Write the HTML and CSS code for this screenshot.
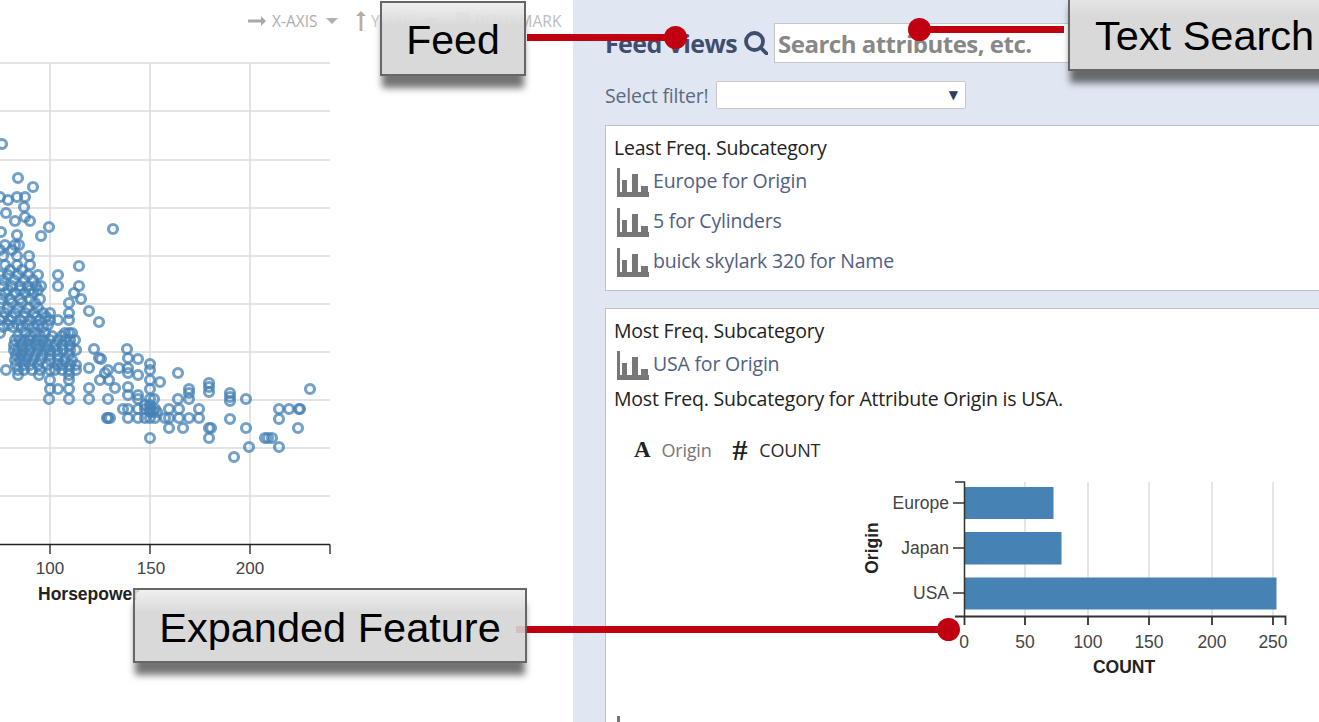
FILE: index.html
```html
<!DOCTYPE html>
<html lang="en">
<head>
<meta charset="utf-8">
<title>Feed Views</title>
<link rel="stylesheet" href="styles.css">
</head>
<body>
<div class="page">
  <section class="plot-side">
    <div class="toolbar">
      <span class="tool tool-x">
        <svg class="ico-right" viewBox="0 0 18 10"><path d="M0 3.6h13V0l5 5-5 5V6.4H0z"/></svg>X-AXIS<i class="caret"></i>
      </span>
      <span class="tool tool-y">
        <svg class="ico-up" viewBox="0 0 10 20"><path d="M3.6 20V5H0l5-5 5 5H6.4v15z"/></svg>Y-AXIS<i class="caret"></i>
      </span>
      <span class="tool tool-b">
        <svg class="ico-mark" viewBox="0 0 13 18"><path d="M0 0h13v18l-6.500-5L0 18z"/></svg>BOOKMARK
      </span>
    </div>
    <svg class="scatter" viewBox="0 60 340 550" id="scatter">
      <g class="grid">
        <path d="M0 63H330M0 111H330M0 160H330M0 208H330M0 256H330M0 304H330M0 352H330M0 400H330M0 448H330M0 496H330"/>
        <path d="M50 63V545M150 63V545M250 63V545"/>
      </g>
      <g class="rings" id="rings"></g>
      <path class="axis" d="M0 544.500H330M50 544.500V554M150 544.500V554M250 544.500V554M330 544.500V554"/>
      <g class="tick-text">
        <text x="50" y="574">100</text>
        <text x="151" y="574">150</text>
        <text x="250" y="574">200</text>
      </g>
      <text class="axis-title" x="38" y="600">Horsepower</text>
    </svg>
  </section>

  <section class="feed">
    <header class="feed-head">
      <h2 class="feed-title">Feed Views</h2>
      <svg class="ico-search" viewBox="0 0 24 24"><circle cx="10.500" cy="10.500" r="8.500"/><path d="M16.500 16.500L22.500 22.500"/></svg>
      <input class="search" type="text" placeholder="Search attributes, etc.">
    </header>
    <div class="filter-row">
      <span class="filter-label">Select filter!</span>
      <div class="select"><span class="select-arrow">▼</span></div>
    </div>

    <article class="card card-least">
      <h3 class="card-title">Least Freq. Subcategory</h3>
      <div class="item"><svg class="ico-bar" viewBox="0 0 32 29"><path d="M0 0h3v24h29v5H0zM5 12h5v12H5zM15 6h6v18h-6zM24 18h7v6h-7z"/></svg><a class="item-link">Europe for Origin</a></div>
      <div class="item"><svg class="ico-bar" viewBox="0 0 32 29"><path d="M0 0h3v24h29v5H0zM5 12h5v12H5zM15 6h6v18h-6zM24 18h7v6h-7z"/></svg><a class="item-link">5 for Cylinders</a></div>
      <div class="item"><svg class="ico-bar" viewBox="0 0 32 29"><path d="M0 0h3v24h29v5H0zM5 12h5v12H5zM15 6h6v18h-6zM24 18h7v6h-7z"/></svg><a class="item-link">buick skylark 320 for Name</a></div>
    </article>

    <article class="card card-most">
      <h3 class="card-title">Most Freq. Subcategory</h3>
      <div class="item item-open"><svg class="ico-bar" viewBox="0 0 32 29"><path d="M0 0h3v24h29v5H0zM5 12h5v12H5zM15 6h6v18h-6zM24 18h7v6h-7z"/></svg><a class="item-link">USA for Origin</a></div>
      <p class="sentence">Most Freq. Subcategory for Attribute Origin is USA.</p>
      <div class="fields">
        <span class="type">A</span><span class="field-a">Origin</span>
        <span class="type type-hash">#</span><span class="field-b">COUNT</span>
      </div>
      <svg class="bars" viewBox="860 478 430 200">
        <path class="bar-grid" d="M1025 482V616M1088 482V616M1149 482V616M1212 482V616M1273 482V616"/>
        <g class="bar-fill">
          <rect x="964" y="487" width="89.500" height="32"/>
          <rect x="964" y="532" width="97.500" height="32.500"/>
          <rect x="964" y="577.500" width="312.500" height="32"/>
        </g>
        <path class="bar-axis" d="M955 482H964.500V616M953 503H964M953 548H964M953 593H964"/>
        <path class="bar-axis bar-axis-x" d="M955 616.500H1285.500V625M964.500 616.500V625M1025 616.500V625M1088 616.500V625M1149 616.500V625M1212 616.500V625M1273 616.500V625"/>
        <g class="bar-y-text">
          <text x="949" y="509">Europe</text>
          <text x="949" y="554">Japan</text>
          <text x="949" y="599">USA</text>
        </g>
        <g class="bar-x-text">
          <text x="964" y="648">0</text>
          <text x="1025" y="648">50</text>
          <text x="1088" y="648">100</text>
          <text x="1149" y="648">150</text>
          <text x="1212" y="648">200</text>
          <text x="1273" y="648">250</text>
        </g>
        <text class="bar-title" x="1124" y="673">COUNT</text>
        <text class="bar-title" transform="translate(878 548) rotate(-90)">Origin</text>
      </svg>
      <div class="item item-next"><svg class="ico-bar" viewBox="0 0 32 29"><path d="M0 0h3v24h29v5H0zM5 12h5v12H5zM15 6h6v18h-6zM24 18h7v6h-7z"/></svg><a class="item-link">Feat for all items</a></div>
    </article>
  </section>
</div>

<div class="note note-feed">Feed</div>
<div class="lead lead-feed"></div><div class="pin pin-feed"></div>
<div class="note note-search">Text Search</div>
<div class="lead lead-search"></div><div class="pin pin-search"></div>
<div class="note note-expanded">Expanded Feature</div>
<div class="lead lead-expanded"></div><div class="pin pin-expanded"></div>
<script src="app.js"></script>
</body>
</html>
```
FILE: styles.css
```css
* { box-sizing: border-box; }
html, body { margin: 0; height: 722px; overflow: hidden; background: #fff; }
body { position: relative; font-family: "Open Sans", sans-serif; }
.page { display: flex; width: 1319px; height: 722px; overflow: hidden; }

/* left: scatter plot */
.plot-side { flex: 0 0 573px; }
.toolbar { display: flex; align-items: center; height: 60px; padding: 0 0 18px 248px; font-size: 15.500px; color: #aeaeae; white-space: nowrap; }
.tool { display: flex; align-items: center; }
.tool-x { width: 109px; }
.tool-y { width: 99px; color: #c9c9c9; }
.tool-b { color: #bdbdbd; }
.ico-right { width: 18px; height: 10px; margin-right: 6px; fill: #a9a9a9; }
.ico-up { width: 10px; height: 20px; margin: 0 5px 0 -1px; fill: #b9aea6; }
.ico-mark { width: 13px; height: 18px; margin-right: 6px; fill: #d2d2d2; }
.caret { width: 0; height: 0; margin-left: 8px; border: 6px solid transparent; border-top: 6px solid #b0b0b0; border-bottom: 0; }
.scatter { display: block; width: 340px; height: 550px; overflow: visible; }
.grid path { fill: none; stroke: #dcdcdc; stroke-width: 1.500; }
.rings { filter: blur(0.4px); }
.rings circle { fill: none; stroke: #4682b4; stroke-width: 3.200; stroke-opacity: 0.75; }
.axis { fill: none; stroke: #222; stroke-width: 1.300; }
.tick-text text { font: 17px "Liberation Sans", sans-serif; fill: #444; text-anchor: middle; }
.axis-title { font: bold 17.500px "Liberation Sans", sans-serif; fill: #222; }

/* right: feed panel */
.feed { flex: 1; min-width: 0; background: #e0e7f2; padding: 23px 0 0 32px; }
.feed-head { display: flex; align-items: center; height: 40px; }
.feed-title { flex: 0 0 132px; margin: 0; font-size: 25px; font-weight: 700; letter-spacing: -0.6px; color: #3f4d6e; white-space: nowrap; }
.ico-search { flex: none; width: 24px; height: 24px; margin-left: 7px; fill: none; stroke: #3f4d6e; stroke-width: 3.800; stroke-linecap: round; }
.search { flex: none; width: 400px; height: 40px; margin-left: 6px; padding: 0 3px; border: 1px solid #c6c6c6; background: #fff; font: 700 24px "Open Sans", sans-serif; letter-spacing: -0.5px; outline: 0; }
.search::placeholder { color: #888; opacity: 1; }
.filter-row { display: flex; align-items: center; gap: 7px; height: 28px; margin-top: 18px; }
.filter-label { flex: 0 0 104px; font-size: 19.500px; letter-spacing: -0.2px; color: #5b6a80; white-space: nowrap; }
.select { display: flex; align-items: center; justify-content: flex-end; width: 250px; height: 28px; padding-right: 7px; background: #fff; border: 1px solid #c9c9c9; border-radius: 2px; }
.select-arrow { font: 12px "DejaVu Sans", sans-serif; color: #2c3c5e; }

.card { width: 760px; padding: 11px 8px 0; background: #fff; border: 1px solid #bcc0c4; }
.card-least { height: 166px; margin-top: 16px; }
.card-most { height: 440px; margin-top: 17px; }
.card-title { margin: 0; height: 22px; font-size: 19.500px; line-height: 22px; font-weight: 400; letter-spacing: -0.2px; color: #222; white-space: nowrap; }
.item { display: flex; height: 40px; padding-left: 3px; }
.card-least .card-title + .item { margin-top: 9px; }
.ico-bar { flex: none; width: 32px; height: 29px; margin-right: 4px; fill: #777; }
.item-link { font-size: 19.500px; line-height: 26px; letter-spacing: -0.2px; color: #52607f; white-space: nowrap; }
.card-most .card-title + .item { margin-top: 9px; height: 36px; }
.sentence { margin: 0; height: 24px; font-size: 19.500px; line-height: 24px; letter-spacing: -0.2px; color: #222; white-space: nowrap; }
.fields { display: flex; align-items: center; height: 36px; margin-top: 21px; padding-left: 20px; font-size: 18px; letter-spacing: -0.2px; white-space: nowrap; }
.type { font: bold 23px "Liberation Serif", serif; color: #222; }
.type-hash { margin-left: 21px; font-weight: 700; font-size: 30px; line-height: 1; }
.field-a { margin-left: 11px; color: #777; }
.field-b { margin-left: 12px; color: #2a2a2a; }
.bars { display: block; width: 430px; height: 200px; margin: 10px 0 0 246px; overflow: visible; }
.bar-grid { fill: none; stroke: #dedede; stroke-width: 1.500; }
.bar-fill rect { fill: #4682b4; }
.bar-axis { fill: none; stroke: #333; stroke-width: 1.500; }
.bar-axis-x { stroke-width: 1.800; }
.bar-y-text text, .bar-x-text text { font: 17.500px "Liberation Sans", sans-serif; fill: #444; }
.bar-y-text text { text-anchor: end; }
.bar-x-text text { text-anchor: middle; }
.bar-title { font: bold 17.500px "Liberation Sans", sans-serif; fill: #222; text-anchor: middle; }
.item-next { margin-top: 38px; }
.item-next .item-link { margin: 2px 0 0 -20px; }

/* callouts laid over the screenshot */
.note { position: absolute; display: flex; align-items: center; justify-content: center; font-family: "Liberation Sans", sans-serif; color: #000; white-space: nowrap; border: 2px solid #666; background: linear-gradient(rgba(236, 236, 236, 0.82), #d9d9d9 32%); box-shadow: 0 14px 7px -2px rgba(0, 0, 0, 0.55); }
.note-feed { left: 380px; top: 1px; width: 146px; height: 75px; padding-top: 4px; font-size: 41px; }
.note-search { left: 1068px; top: -10px; width: 270px; height: 81px; padding: 10px 0 0 25px; justify-content: flex-start; font-size: 41.500px; }
.note-expanded { left: 133px; top: 588px; width: 394px; height: 75px; padding-top: 5px; font-size: 41.500px; }
.lead { position: absolute; height: 7px; background: #c00010; }
.pin { position: absolute; width: 23px; height: 23px; border-radius: 50%; background: #c00010; }
.lead-feed { left: 527px; top: 33.500px; width: 148px; }
.pin-feed { left: 664px; top: 25.500px; }
.lead-search { left: 919px; top: 25.500px; width: 145px; }
.pin-search { left: 907.500px; top: 17.500px; }
.lead-expanded { left: 527px; top: 625.500px; width: 421px; }
.lead-expanded::before { content: ""; position: absolute; left: -11px; top: 0; width: 11px; height: 7px; background: rgba(192, 0, 16, 0.12); }
.pin-expanded { left: 937px; top: 617.500px; }
```
FILE: app.js
```js
var rows = [
  [144,[2]],[178,[18]],[187,[33]],[197,[0,17,25]],[200,[8]],[207,[24]],[213,[6]],[217,[25]],
  [221,[15,30]],[227,[49]],[229,[113]],[232,[1]],[235,[17]],[236,[41]],[245,[5,15,19]],[250,[0,12]],
  [256,[3,17,29]],[265,[5,17,30]],[266,[79]],[270,[10,22]],[275,[0,8,18,28,38,58]],[280,[3,14,24,33]],
  [286,[3,12,20,28,36,41,58,79]],[290,[8,20,30,38]],
  [293,[5,15,25,33,74]],[299,[2,10,20,30,40,81]],[303,[0,12,22,35,69]],[308,[8,18,28,38]],[311,[89]],
  [313,[5,15,25,34,43,50,69]],[317,[3,12,24,36,46]],[320,[0,9,20,30,40,50,58,69]],[322,[99]],[325,[8,18,28,38,48]],[327,[3,13,22,33,43]],
  [333,[0,25,35,45,65,69,72]],[336,[18,30,40,52,62]],[340,[15,20,25,30,37,43,50,58,65,70,75]],[345,[14,22,28,35,40,47,55,62,70]],
  [350,[14,18,24,30,38,45,50,57,63,70,76]],[355,[16,22,28,35,42,50,58,69]],
  [360,[15,20,26,33,40,50,58,65,72]],[365,[16,24,30,38,47,58,62,70,76]],
  [370,[6,18,24,32,40,50,55,62,69,76]],[375,[18,39,69]],[380,[50,69]],[389,[50,58,69]],[399,[49,69]],
  [349,[94,127]],[358,[99,128]],[359,[101,138]],[364,[150]],[368,[89,119,128]],[370,[108,150]],
  [373,[105,128,178]],[375,[138]],[380,[100,109,150]],[382,[160]],[383,[209]],[387,[128,209]],
  [388,[89,115]],[389,[150,189,310]],[392,[209]],[393,[189,230]],[395,[128,138]],[397,[230]],
  [399,[89,108,138,150,154,178,189,246]],[401,[230]],[405,[145,150]],
  [409,[123,128,138,145,150,155,169,179,199,279,289,299,300]],[412,[150,153,157]],
  [418,[107,108,110,128,138,145,150,155,165,169,179,189,199]],[419,[230,279]],
  [428,[169,183,209,211,246,298]],[438,[150,209,265,268,272]],[447,[249,279]],[457,[234]]
];
var host = document.getElementById("rings");
rows.forEach(function (row) {
  row[1].forEach(function (x) {
    var c = document.createElementNS("http://www.w3.org/2000/svg", "circle");
    c.setAttribute("cx", x);
    c.setAttribute("cy", row[0]);
    c.setAttribute("r", 4.5);
    host.appendChild(c);
  });
});
```
